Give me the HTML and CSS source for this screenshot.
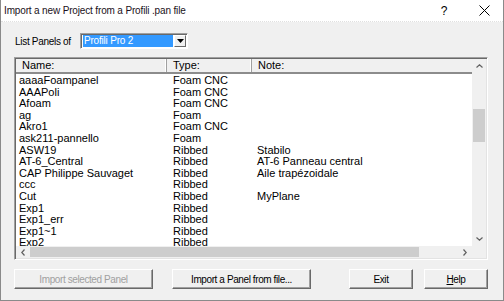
FILE: index.html
```html
<!doctype html>
<html lang="en">

<head>
    <meta charset="UTF-8" />
    <title>Import a new Project from a Profili .pan file</title>
    <link rel="stylesheet" href="styles.css">
</head>

<body>
    <div class="window">
        <div class="titlebar">
            <span class="title">Import a new Project from a Profili .pan file</span>
            <span class="help-btn">?</span>
            <span class="close-btn">
                <svg width="11" height="11" viewBox="0 0 11 11"><path d="M0.5 0.5 L10.5 10.5 M10.5 0.5 L0.5 10.5" stroke="#000" stroke-width="1" fill="none"/></svg>
            </span>
        </div>

        <div class="content">
            <div class="panel-row">
                <span class="label">List Panels of</span>
                <div class="combo">
                    <span class="combo-value">Profili Pro 2</span>
                    <span class="combo-arrow">
                        <svg width="7" height="4" viewBox="0 0 7 4"><path d="M0 0 H7 L3.5 4 Z" fill="#000"/></svg>
                    </span>
                </div>
            </div>

            <div class="list">
                <div class="list-main">
                    <div class="list-header">
                        <div class="hcell name">Name:</div>
                        <div class="hcell type">Type:</div>
                        <div class="hcell note">Note:</div>
                    </div>
                    <div class="list-rows" id="rows"></div>
                </div>
                <div class="vscroll">
                    <span class="arrow">
                        <svg width="7" height="4" viewBox="0 0 7 4"><path d="M0.5 3.5 L3.5 0.8 L6.5 3.5" stroke="#606060" stroke-width="1.2" fill="none"/></svg>
                    </span>
                    <div class="vtrack"><div class="vthumb"></div></div>
                    <span class="arrow">
                        <svg width="7" height="4" viewBox="0 0 7 4"><path d="M0.5 0.5 L3.5 3.2 L6.5 0.5" stroke="#606060" stroke-width="1.2" fill="none"/></svg>
                    </span>
                </div>
                <div class="hscroll">
                    <span class="arrow">
                        <svg width="4" height="7" viewBox="0 0 4 7"><path d="M3.5 0.5 L0.8 3.5 L3.5 6.5" stroke="#606060" stroke-width="1.2" fill="none"/></svg>
                    </span>
                    <div class="htrack"><div class="hthumb"></div></div>
                    <span class="arrow">
                        <svg width="4" height="7" viewBox="0 0 4 7"><path d="M0.5 0.5 L3.2 3.5 L0.5 6.5" stroke="#606060" stroke-width="1.2" fill="none"/></svg>
                    </span>
                </div>
                <div class="corner"></div>
            </div>

            <div class="buttons">
                <button class="btn wide" disabled>Import selected Panel</button>
                <button class="btn wide second">Import a Panel from file...</button>
                <button class="btn small exit">Exit</button>
                <button class="btn small help"><u>H</u>elp</button>
            </div>
        </div>
    </div>

    <script>
        const panels = [
            ["aaaaFoampanel", "Foam CNC", ""],
            ["AAAPoli", "Foam CNC", ""],
            ["Afoam", "Foam CNC", ""],
            ["ag", "Foam", ""],
            ["Akro1", "Foam CNC", ""],
            ["ask211-pannello", "Foam", ""],
            ["ASW19", "Ribbed", "Stabilo"],
            ["AT-6_Central", "Ribbed", "AT-6 Panneau central"],
            ["CAP Philippe Sauvaget", "Ribbed", "Aile trapézoidale"],
            ["ccc", "Ribbed", ""],
            ["Cut", "Ribbed", "MyPlane"],
            ["Exp1", "Ribbed", ""],
            ["Exp1_err", "Ribbed", ""],
            ["Exp1~1", "Ribbed", ""],
            ["Exp2", "Ribbed", ""],
        ];

        const rows = document.getElementById("rows");
        panels.forEach(function (p) {
            const row = document.createElement("div");
            row.className = "row";
            p.forEach(function (text, i) {
                const cell = document.createElement("span");
                cell.className = "cell c" + i;
                cell.textContent = text;
                row.appendChild(cell);
            });
            rows.appendChild(row);
        });
    </script>
</body>

</html>
```

FILE: styles.css
```css
html,
body {
    margin: 0;
    padding: 0;
}

body {
    font-family: "Liberation Sans", Arial, sans-serif;
    font-size: 11px;
    color: #000;
    background: #f0f0f0;
}

.window {
    width: 504px;
    height: 301px;
    box-sizing: border-box;
    border: 1px solid #8a8a8a;
    border-top: none;
    background: #f0f0f0;
    display: flex;
    flex-direction: column;
}

.titlebar {
    height: 21px;
    background: #fff;
    border-bottom: 1px dotted #e0e0e0;
    display: flex;
    align-items: center;
    padding-left: 3px;
    font-size: 10px;
    letter-spacing: -0.15px;
}

.title {
    flex: 1;
    color: #1a1020;
}

.help-btn {
    width: 12px;
    margin-right: 29px;
    font-size: 12px;
    text-align: center;
}

.close-btn {
    width: 11px;
    height: 11px;
    margin-right: 13px;
    display: flex;
}

.content {
    flex: 1;
    padding: 11px 0 0 12px;
}

.panel-row {
    display: flex;
    align-items: center;
    height: 16px;
}

.label {
    margin-left: 2px;
    width: 65px;
    white-space: nowrap;
    font-size: 10px;
    letter-spacing: -0.3px;
}

.combo {
    width: 103px;
    height: 14px;
    background: #fff;
    border-top: 1px solid #a0a0a0;
    border-left: 1px solid #a0a0a0;
    border-right: 1px solid #fff;
    border-bottom: 1px solid #fff;
    box-shadow: inset 1px 1px 0 #696969;
    display: flex;
    align-items: center;
    padding: 0 1px 0 2px;
    box-sizing: content-box;
}

.combo-value {
    flex: 1;
    height: 12px;
    line-height: 12px;
    background: #3399ff;
    color: #fff;
    padding-left: 1px;
    margin-right: 1px;
    font-size: 10px;
    letter-spacing: -0.2px;
}

.combo-arrow {
    width: 12px;
    height: 12px;
    box-sizing: border-box;
    background: #f0f0f0;
    border-top: 1px solid #fff;
    border-left: 1px solid #fff;
    border-right: 1px solid #696969;
    border-bottom: 1px solid #696969;
    display: flex;
    align-items: center;
    justify-content: center;
}

.list {
    margin-top: 8px;
    margin-left: 1px;
    width: 474px;
    height: 203px;
    box-sizing: border-box;
    border-top: 1px solid #a0a0a0;
    border-left: 1px solid #a0a0a0;
    border-right: 1px solid #fff;
    border-bottom: 1px solid #fff;
    display: grid;
    grid-template-columns: 1fr 14px;
    grid-template-rows: 1fr 12px;
    background: #fff;
    box-shadow: inset 1px 1px 0 #696969, inset -1px -1px 0 #e3e3e3;
    padding: 1px;
}

.list-main {
    overflow: hidden;
    background: #fff;
}

.list-header {
    display: flex;
    height: 13px;
    background: #f0f0f0;
    border-bottom: 2px solid #8c8c8c;
    box-sizing: content-box;
}

.hcell {
    line-height: 13px;
    box-sizing: border-box;
    border-right: 1px solid #a0a0a0;
    box-shadow: inset -1px 0 0 #fff;
}

.hcell.name {
    width: 151px;
    padding-left: 6px;
}

.hcell.type {
    width: 85px;
    padding-left: 6px;
}

.hcell.note {
    flex: 1;
    padding-left: 6px;
    border-right: none;
    box-shadow: none;
}

.list-rows {
    padding-top: 1px;
}

.row {
    display: flex;
    height: 11.6px;
    line-height: 11.6px;
    white-space: nowrap;
}

.cell.c0 {
    width: 154px;
    padding-left: 3px;
}

.cell.c1 {
    width: 84px;
}

.vscroll {
    background: #f0f0f0;
    display: flex;
    flex-direction: column;
    align-items: stretch;
}

.vscroll .arrow {
    height: 14px;
    display: flex;
    align-items: center;
    justify-content: center;
}

.vtrack {
    flex: 1;
    padding-top: 36px;
}

.vthumb {
    height: 33px;
    margin: 0 1px;
    background: #cdcdcd;
}

.hscroll {
    background: #f0f0f0;
    display: flex;
    align-items: stretch;
}

.hscroll .arrow {
    width: 14px;
    display: flex;
    align-items: center;
    justify-content: center;
}

.htrack {
    flex: 1;
    display: flex;
    align-items: center;
    padding-right: 39px;
}

.hthumb {
    flex: 1;
    height: 10px;
    background: #cdcdcd;
}

.corner {
    background: #f0f0f0;
}

.buttons {
    display: flex;
    margin-top: 9px;
    height: 20px;
}

.btn {
    height: 20px;
    font-family: "Liberation Sans", Arial, sans-serif;
    font-size: 10px;
    letter-spacing: -0.4px;
    color: #000;
    background: #f0f0f0;
    border-top: 1px solid #fff;
    border-left: 1px solid #fff;
    border-right: 1px solid #696969;
    border-bottom: 1px solid #696969;
    box-shadow: inset -1px -1px 0 #a0a0a0;
    padding: 0;
    margin: 0;
}

.btn:disabled {
    color: #a0a0a0;
}

.btn.wide {
    width: 139px;
    margin-left: 1px;
}

.btn.second {
    margin-left: 19px;
}

.btn.small {
    width: 64px;
}

.btn.exit {
    margin-left: 38px;
}

.btn.help {
    margin-left: 11px;
}
```
